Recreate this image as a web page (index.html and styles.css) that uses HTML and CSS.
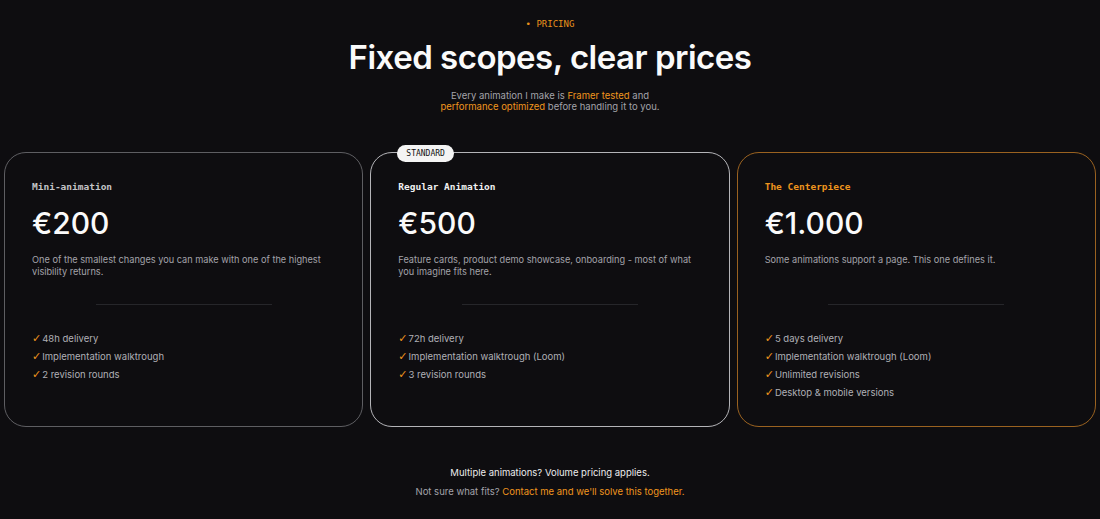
FILE: index.html
```html
<!DOCTYPE html>
<html lang="en">
<head>
    <meta charset="UTF-8">
    <meta name="viewport" content="width=device-width, initial-scale=1.0">
    <title>Pricing</title>
    <link rel="stylesheet" href="styles.css">
</head>
<body>

    <section class="pricing">
        <div class="eyebrow">&bull; PRICING</div>
        <h1>Fixed scopes, clear prices</h1>
        <p class="lead">
            Every animation I make is <span class="accent">Framer tested</span> and<br>
            <span class="accent">performance optimized</span> before handling it to you.
        </p>

        <div class="plans">
            <!-- Mini -->
            <div class="plan">
                <div class="plan-name">Mini-animation</div>
                <div class="price">€200</div>
                <p class="desc">One of the smallest changes you can make with one of the highest visibility returns.</p>
                <div class="divider"></div>
                <ul class="features">
                    <li><span class="check">✓</span>48h delivery</li>
                    <li><span class="check">✓</span>Implementation walktrough</li>
                    <li><span class="check">✓</span>2 revision rounds</li>
                </ul>
            </div>

            <!-- Standard -->
            <div class="plan plan-standard">
                <span class="badge">STANDARD</span>
                <div class="plan-name">Regular Animation</div>
                <div class="price">€500</div>
                <p class="desc">Feature cards, product demo showcase, onboarding - most of what you imagine fits here.</p>
                <div class="divider"></div>
                <ul class="features">
                    <li><span class="check">✓</span>72h delivery</li>
                    <li><span class="check">✓</span>Implementation walktrough (Loom)</li>
                    <li><span class="check">✓</span>3 revision rounds</li>
                </ul>
            </div>

            <!-- Centerpiece -->
            <div class="plan plan-premium">
                <div class="plan-name">The Centerpiece</div>
                <div class="price">€1.000</div>
                <p class="desc">Some animations support a page. This one defines it.</p>
                <div class="divider"></div>
                <ul class="features">
                    <li><span class="check">✓</span>5 days delivery</li>
                    <li><span class="check">✓</span>Implementation walktrough (Loom)</li>
                    <li><span class="check">✓</span>Unlimited revisions</li>
                    <li><span class="check">✓</span>Desktop &amp; mobile versions</li>
                </ul>
            </div>
        </div>

        <div class="footnote">
            <p class="volume">Multiple animations? Volume pricing applies.</p>
            <p class="contact">Not sure what fits? <span class="accent">Contact me and we'll solve this together.</span></p>
        </div>
    </section>

</body>
</html>
```

FILE: styles.css
```css
body {
    margin: 0;
    background-color: #0e0d10;
    color: #f2f2f2;
    font-family: Inter, "Noto Sans", sans-serif;
}

.pricing { padding: 18px 4px 0; text-align: center; }

.eyebrow {
    font-family: "DejaVu Sans Mono", monospace;
    font-size: 9px;
    line-height: 12px;
    color: #e8921c;
}

h1 {
    margin: 7px 0 0;
    font-size: 33px;
    line-height: 40px;
    font-weight: 600;
    letter-spacing: -0.5px;
    color: #fafafa;
}

.lead {
    margin: 13px 0 0;
    font-size: 9.5px;
    line-height: 11px;
    color: #a3a3aa;
}

.accent { color: #ee951e; }

.plans {
    display: grid;
    grid-template-columns: repeat(3, 1fr);
    gap: 7px;
    margin-top: 40px;
    text-align: left;
}

.plan {
    position: relative;
    border: 1px solid #5e5e62;
    border-radius: 22px;
    padding: 28px 27px 24px;
}
.plan-standard { border-color: #b4b4b8; }
.plan-premium { border-color: #9a6220; }

.badge {
    position: absolute;
    top: -8px;
    left: 26px;
    background: #f4f4f4;
    color: #111;
    border-radius: 9px;
    padding: 0 9px;
    font-family: "DejaVu Sans Mono", monospace;
    font-size: 8px;
    line-height: 17px;
}

.plan-name {
    font-family: "DejaVu Sans Mono", monospace;
    font-size: 9.5px;
    line-height: 12px;
    font-weight: bold;
    color: #c4c4c7;
}
.plan-standard .plan-name { color: #f0f0f0; }
.plan-premium .plan-name { color: #ee951e; }

.price {
    margin-top: 12px;
    font-size: 30px;
    line-height: 36px;
    font-weight: 500;
    color: #fafafa;
}

.desc {
    margin: 13px 0 0;
    min-height: 24px;
    font-size: 9.2px;
    line-height: 12px;
    color: #a3a3aa;
}

.divider {
    width: 176px;
    height: 1px;
    margin: 26px auto 0;
    background: #26262a;
}

.features {
    list-style: none;
    margin: 25px 0 0;
    padding: 0;
    font-size: 9.5px;
    line-height: 18px;
    color: #b0b0b6;
}
.check {
    font-family: "DejaVu Sans", sans-serif;
    font-size: 11px;
    color: #ee951e;
    margin-right: 1px;
}

.footnote { margin-top: 40px; font-size: 9.5px; }
.footnote p { margin: 0; line-height: 12px; }
.volume { color: #ececec; }
.contact { margin-top: 7px !important; color: #a3a3aa; }
```
